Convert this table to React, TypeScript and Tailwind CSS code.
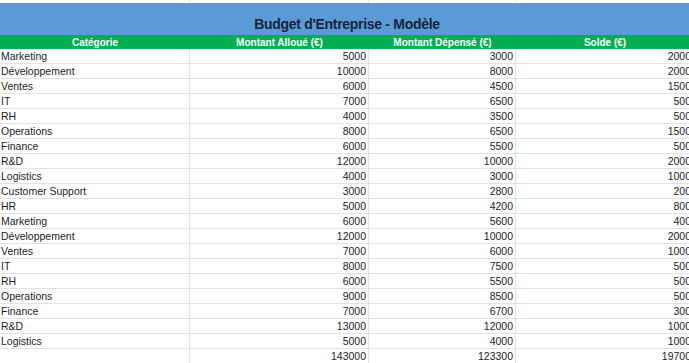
const ROWS: [string, number, number, number][] = [
  ["Marketing", 5000, 3000, 2000],
  ["Développement", 10000, 8000, 2000],
  ["Ventes", 6000, 4500, 1500],
  ["IT", 7000, 6500, 500],
  ["RH", 4000, 3500, 500],
  ["Operations", 8000, 6500, 1500],
  ["Finance", 6000, 5500, 500],
  ["R&D", 12000, 10000, 2000],
  ["Logistics", 4000, 3000, 1000],
  ["Customer Support", 3000, 2800, 200],
  ["HR", 5000, 4200, 800],
  ["Marketing", 6000, 5600, 400],
  ["Développement", 12000, 10000, 2000],
  ["Ventes", 7000, 6000, 1000],
  ["IT", 8000, 7500, 500],
  ["RH", 6000, 5500, 500],
  ["Operations", 9000, 8500, 500],
  ["Finance", 7000, 6700, 300],
  ["R&D", 13000, 12000, 1000],
  ["Logistics", 5000, 4000, 1000],
];

const WIDTHS = ["w-[190px]", "w-[179px]", "w-[147px]", "w-[178px]"];

function Row({ cells }: { cells: (string | number)[] }) {
  return (
    <div className="flex text-[10.5px] leading-none text-[#1e1e1e]">
      {cells.map((c, i) => (
        <div
          key={i}
          className={`${WIDTHS[i]} h-[15px] shrink-0 flex items-end pb-[2px] border-b border-r border-[#e2e2e2] overflow-hidden whitespace-nowrap ${
            i === 0 ? "justify-start pl-[1px]" : "justify-end pr-[2px]"
          }`}
        >
          {c}
        </div>
      ))}
    </div>
  );
}

export default function App() {
  const totals = [1, 2, 3].map((k) => ROWS.reduce((s, r) => s + (r[k] as number), 0));

  return (
    <div className="w-[689px] h-[363px] overflow-hidden bg-white font-['Liberation_Sans',Arial,sans-serif]">
      <div className="w-[694px]">
        <div className="flex h-[3px]">
          {WIDTHS.map((w) => (
            <div key={w} className={`${w} shrink-0 border-r border-[#e2e2e2]`} />
          ))}
        </div>
        <div className="h-[32px] bg-[#5b9bd5] flex items-end justify-center pb-[4px]">
          <span className="text-[14px] leading-none font-bold text-[#14253d] tracking-[-0.3px]">
            Budget d'Entreprise - Modèle
          </span>
        </div>
        <div className="flex h-[14px] bg-[#00b050] text-white font-bold text-[10px]">
          {["Catégorie", "Montant Alloué (€)", "Montant Dépensé (€)", "Solde (€)"].map((h, i) => (
            <div key={h} className={`${WIDTHS[i]} shrink-0 flex items-center justify-center`}>
              {h}
            </div>
          ))}
        </div>
        {ROWS.map((r, i) => (
          <Row key={i} cells={r} />
        ))}
        <Row cells={["", ...totals]} />
      </div>
    </div>
  );
}
